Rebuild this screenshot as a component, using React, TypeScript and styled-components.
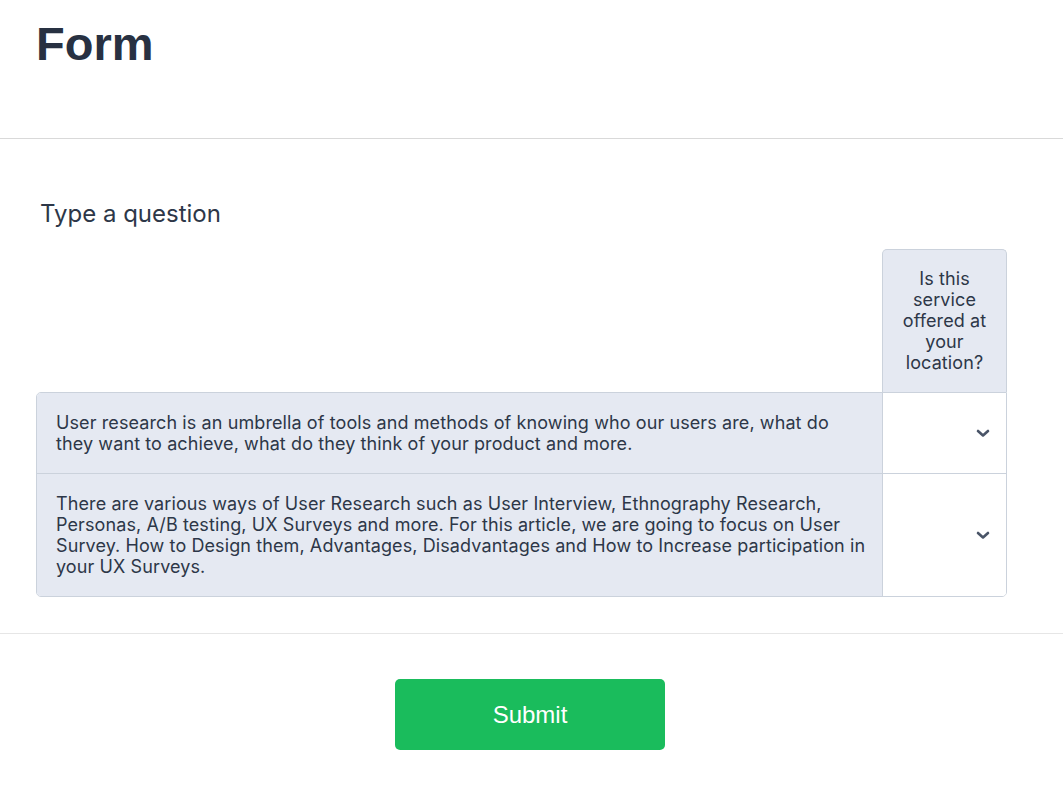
import React from "react";
import styled, { createGlobalStyle } from "styled-components";

const GlobalStyle = createGlobalStyle`
  html, body { margin: 0; padding: 0; background: #ffffff; }
  body { font-family: Inter, "Noto Sans", sans-serif; color: #2d3748; }
  * { box-sizing: border-box; }
`;

const Header = styled.header`
  height: 139px;
  padding: 16px 36px 0;
  border-bottom: 1px solid #d9d9d9;
`;

const Title = styled.h1`
  margin: 0;
  font-family: "Liberation Sans", Arial, sans-serif;
  font-weight: 700;
  font-size: 47px;
  line-height: 56px;
  color: #283142;
`;

const Section = styled.section`
  padding: 60px 56px 36px 36px;
  border-bottom: 1px solid #e6e6e6;
`;

const Question = styled.div`
  padding-left: 4px;
  font-size: 24px;
  line-height: 29px;
  color: #2d3748;
  margin-bottom: 21px;
`;

const Table = styled.div`
  display: grid;
  grid-template-columns: 1fr 125px;
`;

const Spacer = styled.div``;

const HeaderCell = styled.div`
  background: #e5e9f2;
  border: 1px solid #cbd2dc;
  border-bottom: none;
  border-radius: 5px 5px 0 0;
  padding: 18px 8px 19px;
  text-align: center;
  font-size: 18px;
  letter-spacing: 0.1px;
  line-height: 21px;
  color: #2d3748;
`;

const Body = styled.div`
  grid-column: 1 / -1;
  display: grid;
  grid-template-columns: 1fr 124px;
  border: 1px solid #cbd2dc;
  border-radius: 5px 0 5px 5px;
  overflow: hidden;
`;

const LabelCell = styled.div<{ $first?: boolean }>`
  background: #e5e9f2;
  padding: 19px 16px 19px 19px;
  font-size: 18px;
  letter-spacing: 0.1px;
  line-height: 21px;
  color: #2d3748;
  border-top: ${(p) => (p.$first ? "none" : "1px solid #cbd2dc")};
`;

const ValueCell = styled.div<{ $first?: boolean }>`
  background: #ffffff;
  border-left: 1px solid #cbd2dc;
  border-top: ${(p) => (p.$first ? "none" : "1px solid #cbd2dc")};
  display: flex;
  align-items: center;
  justify-content: flex-end;
  padding-right: 16px;
`;

const Footer = styled.div`
  display: flex;
  justify-content: center;
  padding: 45px 3px 0 0;
`;

const SubmitButton = styled.button`
  width: 270px;
  height: 71px;
  border: none;
  border-radius: 5px;
  background: #1abc5c;
  color: #ffffff;
  font-family: "Liberation Sans", Arial, sans-serif;
  font-size: 24px;
  cursor: pointer;
`;

const Chevron = () => (
  <svg width="14" height="9" viewBox="0 0 14 9" fill="none">
    <path
      d="M2 2 L7 6.5 L12 2"
      stroke="#4a5568"
      strokeWidth="2.6"
      strokeLinecap="round"
      strokeLinejoin="round"
    />
  </svg>
);

const rows = [
  "User research is an umbrella of tools and methods of knowing who our users are, what do they want to achieve, what do they think of your product and more.",
  "There are various ways of User Research such as User Interview, Ethnography Research, Personas, A/B testing, UX Surveys and more. For this article, we are going to focus on User Survey. How to Design them, Advantages, Disadvantages and How to Increase participation in your UX Surveys.",
];

export default function App() {
  return (
    <>
      <GlobalStyle />
      <Header>
        <Title>Form</Title>
      </Header>
      <Section>
        <Question>Type a question</Question>
        <Table>
          <Spacer />
          <HeaderCell>Is this service offered at your location?</HeaderCell>
          <Body>
            {rows.map((r, i) => (
              <React.Fragment key={i}>
                <LabelCell $first={i === 0}>{r}</LabelCell>
                <ValueCell $first={i === 0}>
                  <Chevron />
                </ValueCell>
              </React.Fragment>
            ))}
          </Body>
        </Table>
      </Section>
      <Footer>
        <SubmitButton>Submit</SubmitButton>
      </Footer>
    </>
  );
}
